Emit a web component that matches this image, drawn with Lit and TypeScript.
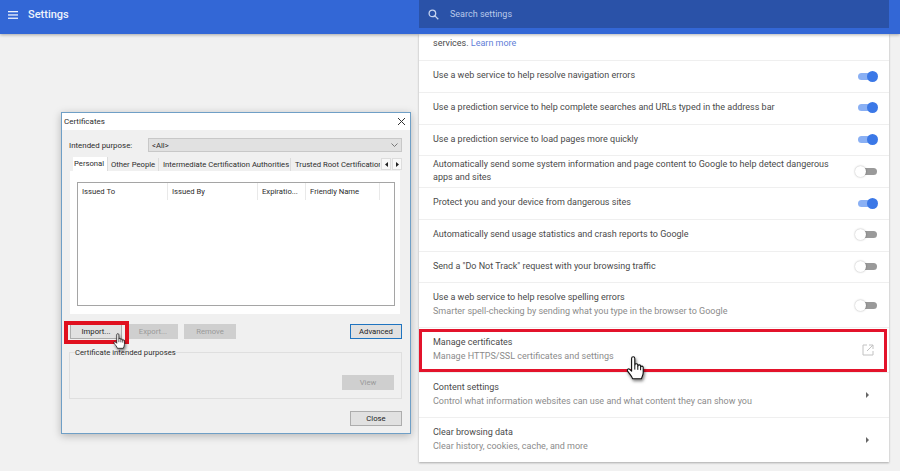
import { LitElement, html, css, svg } from "lit";
import { customElement } from "lit/decorators.js";

type Row = { title?: string; sub?: string; tall?: boolean; on?: boolean; off?: boolean; arrow?: boolean; ext?: boolean; mark?: boolean };

const rows: Row[] = [
  { title: "Use a web service to help resolve navigation errors", on: true },
  { title: "Use a prediction service to help complete searches and URLs typed in the address bar", on: true },
  { title: "Use a prediction service to load pages more quickly", on: true },
  { title: "Automatically send some system information and page content to Google to help detect dangerous apps and sites", off: true },
  { title: "Protect you and your device from dangerous sites", on: true },
  { title: "Automatically send usage statistics and crash reports to Google", off: true },
  { title: 'Send a "Do Not Track" request with your browsing traffic', off: true },
  { title: "Use a web service to help resolve spelling errors", sub: "Smarter spell-checking by sending what you type in the browser to Google", tall: true, off: true },
  { title: "Manage certificates", sub: "Manage HTTPS/SSL certificates and settings", tall: true, ext: true, mark: true },
  { title: "Content settings", sub: "Control what information websites can use and what content they can show you", tall: true, arrow: true },
  { title: "Clear browsing data", sub: "Clear history, cookies, cache, and more", tall: true, arrow: true },
];

const hand = svg`
  <path d="M5.6 2.4a1.6 1.6 0 0 1 3.2 0v6.8a1.5 1.5 0 0 1 3 .2v.8a1.4 1.4 0 0 1 2.8.2v.9a1.3 1.3 0 0 1 2.6.2v5.2c0 2.6-1.2 3.6-1.7 6H6.6c-.8-2.8-2.8-4.4-5-7.6-.9-1.5.8-3 2.1-1.8l1.9 1.9z" fill="#fff" stroke="#111" stroke-width="1.1" stroke-linejoin="round"/>
  <path d="M8.8 9.4v4.2M11.8 10.2v3.6M14.6 11.2v3" fill="none" stroke="#111" stroke-width="1"/>`;

@customElement("app-root")
export class AppRoot extends LitElement {
  static styles = css`
    :host { display: block; width: 900px; height: 471px; overflow: hidden; background: #f1f1f1; font-family: Roboto, "Liberation Sans", sans-serif; }
    .header { position: relative; z-index: 2; display: flex; height: 34px; background: #3367d6; box-shadow: 0 1px 3px rgba(0,0,0,.3); }
    .brand { width: 419px; flex: none; display: flex; align-items: center; padding: 0 0 0 8px; gap: 10px; box-sizing: border-box; color: #eef3fc; font-size: 11px; font-weight: 500; height: 29px; }
    .search { width: 470px; height: 28px; background: #2a52a8; display: flex; align-items: center; padding-left: 9px; gap: 11px; box-sizing: border-box; color: #b9c9ea; font-size: 9px; }
    .main { display: flex; align-items: flex-start; }
    .left { width: 419px; flex: none; padding: 78px 0 0 61px; box-sizing: border-box; }

    .dialog { width: 350px; box-sizing: border-box; border: 1px solid #6f9fc6; background: #f0f0f0; box-shadow: 0 2px 8px rgba(0,0,0,.25); font-family: Roboto, "Noto Sans", sans-serif; font-size: 7.7px; color: #2c2c2c; padding-bottom: 7px; }
    .title { height: 17px; background: #fff; display: flex; align-items: center; justify-content: space-between; padding: 0 4px 0 2px; font-size: 8px; }
    .purpose { display: flex; align-items: center; height: 14px; margin: 8px 8px 0 7px; }
    .purpose span { width: 79px; flex: none; font-size: 7.9px; }
    .select { flex: 1; height: 14px; background: #e1e1e1; border: 1px solid #c8c8c8; box-sizing: border-box; display: flex; align-items: center; justify-content: space-between; padding: 0 3px; }
    .tabs { display: flex; height: 14px; margin: 5px 8px 0 11px; align-items: flex-end; }
    .tab { height: 13px; display: flex; align-items: center; box-sizing: border-box; padding: 0 4px; background: #f0f0f0; border-right: 1px solid #dcdcdc; white-space: nowrap; overflow: hidden; flex: none; }
    .tab.active { height: 14px; background: #fff; width: 35px; padding: 0 1px 2px; }
    .tab.wide1 { width: 51px; padding-left: 3px; }
    .tab.wide2 { width: 132px; }
    .tab.clip { width: 89px; border: 0; }
    .scroll { width: 10px; height: 12px; margin: 0 0 1px 1px; background: #f8f8f8; border: 1px solid #ddd; box-sizing: border-box; display: flex; align-items: center; justify-content: center; flex: none; }
    .panel { height: 143px; margin: 0 10px 0 8px; background: #fff; padding: 11px 5px 0 7px; box-sizing: border-box; }
    .list { height: 124px; border: 1px solid #a5a5a5; box-sizing: border-box; }
    .cols { display: flex; height: 17px; }
    .col { box-sizing: border-box; height: 17px; border-right: 1px solid #e9e9e9; display: flex; align-items: center; padding-left: 4px; flex: none; }
    .c90 { width: 90px; }
    .c48 { width: 48px; }
    .c74 { width: 74px; }
    .buttons { display: flex; margin: 10px 8px 0 8px; gap: 6px; }
    .btn { height: 15px; box-sizing: border-box; border: 1px solid #adadad; background: #e1e1e1; display: flex; align-items: center; justify-content: center; flex: none; color: #222; }
    .btn.dim { background: #cfcfcf; border-color: #cfcfcf; color: #9a9a9a; }
    .btn.blue { border: 1px solid #1f74c0; background: #e1e1e1; }
    .push { margin-left: auto; }
    .w52 { width: 52px; }
    .w50 { width: 50px; }
    .import { position: relative; }
    .import::after { content: ""; position: absolute; left: -7px; top: -4px; width: 65px; height: 23px; box-sizing: border-box; border: 4px solid #e0101f; }
    .group { position: relative; margin: 13px 8px 0 7px; height: 47px; box-sizing: border-box; border: 1px solid #dfdfdf; display: flex; justify-content: flex-end; padding: 22px 7px 0 0; }
    .group > span { position: absolute; left: 5px; top: -5px; background: #f0f0f0; }
    .closeRow { display: flex; justify-content: flex-end; margin: 12px 8px 0 0; }
    .pointer { position: absolute; z-index: 1; filter: drop-shadow(1px 2px 1.5px rgba(0,0,0,.5)); }
    .pointer.small { left: 42px; top: 8px; }
    .pointer.big { left: 207px; top: 28px; }

    .card { width: 470px; height: 428px; background: #fff; overflow: hidden; box-shadow: 0 1px 2px rgba(0,0,0,.3); font-size: 9px; line-height: 13.7px; color: #4a4a4a; }
    .intro { height: 26px; box-sizing: border-box; padding: 3px 14px 0; }
    .intro a { color: #5f80d8; text-decoration: none; }
    .row { position: relative; height: 31.75px; box-sizing: border-box; border-top: 1px solid #efefef; display: flex; align-items: center; padding: 0 10px 0.5px 14px; }
    .row.tall { height: 45px; }
    .text { flex: 1; min-width: 0; padding-right: 20px; }
    .sub { color: #8b8b8b; }
    .toggle { position: relative; width: 21px; height: 11px; flex: none; }
    .toggle i { position: absolute; top: 2px; left: 0; width: 19px; height: 7px; border-radius: 3.5px; background: #9a9a9a; }
    .toggle b { position: absolute; top: 0; left: -3px; width: 11px; height: 11px; border-radius: 50%; background: #fff; box-shadow: 0 0 2px rgba(0,0,0,.35); }
    .toggle.on i { background: #8ab0f4; }
    .toggle.on b { left: 9px; background: #3b78e7; box-shadow: none; }
    .mark { position: absolute; left: 0; top: 1px; right: 2px; height: 43px; box-sizing: border-box; border: 3px solid #e3132b; }
    .arrow { width: 0; height: 0; border-left: 3px solid #666; border-top: 3px solid transparent; border-bottom: 3px solid transparent; margin-right: 10px; flex: none; }
    .ext { flex: none; margin-right: 5px; }
  `;

  private row(r: Row) {
    return html`<div class="row ${r.tall ? "tall" : ""}">
      <div class="text">${r.title}${r.sub ? html`<div class="sub">${r.sub}</div>` : ""}</div>
      ${r.on ? html`<div class="toggle on"><i></i><b></b></div>` : ""}
      ${r.off ? html`<div class="toggle"><i></i><b></b></div>` : ""}
      ${r.arrow ? html`<div class="arrow"></div>` : ""}
      ${r.ext ? html`<svg class="ext" width="12" height="12" viewBox="0 0 12 12" fill="none" stroke="#c2c2c2" stroke-width="1"><path d="M5 1H1v10h10V7M7 1h4v4M11 1L5 7"/></svg>` : ""}
      ${r.mark ? html`<div class="mark"></div>
        <svg class="pointer big" width="18" height="25" viewBox="0 0 18 25">${hand}</svg>` : ""}
    </div>`;
  }

  render() {
    return html`
      <div class="header">
        <div class="brand">
          <svg width="10" height="8" viewBox="0 0 10 8" fill="#eef3fc"><rect width="10" height="1.3"/><rect y="3.3" width="10" height="1.3"/><rect y="6.6" width="10" height="1.3"/></svg>
          Settings
        </div>
        <div class="search">
          <svg width="11" height="11" viewBox="0 0 11 11" fill="none" stroke="#c6d4f0" stroke-width="1.3"><circle cx="4.4" cy="4.4" r="3.3"/><path d="M6.9 6.9L10.3 10.3"/></svg>
          Search settings
        </div>
      </div>
      <div class="main">
        <div class="left">
          <div class="dialog">
            <div class="title">Certificates
              <svg width="9" height="9" viewBox="0 0 9 9" stroke="#333" stroke-width="1"><path d="M1 1l7 7M8 1L1 8"/></svg>
            </div>
            <div class="purpose"><span>Intended purpose:</span>
              <div class="select">&lt;All&gt;
                <svg width="7" height="4" viewBox="0 0 7 4" fill="none" stroke="#777"><path d="M.5.5l3 3 3-3"/></svg>
              </div>
            </div>
            <div class="tabs">
              <div class="tab active">Personal</div>
              <div class="tab wide1">Other People</div>
              <div class="tab wide2">Intermediate Certification Authorities</div>
              <div class="tab clip">Trusted Root Certification Authorities</div>
              <div class="scroll"><svg width="3" height="5" viewBox="0 0 3 5" fill="#222"><path d="M3 0v5L0 2.5z"/></svg></div>
              <div class="scroll"><svg width="3" height="5" viewBox="0 0 3 5" fill="#222"><path d="M0 0v5l3-2.5z"/></svg></div>
            </div>
            <div class="panel">
              <div class="list">
                <div class="cols">
                  <div class="col c90">Issued To</div>
                  <div class="col c90">Issued By</div>
                  <div class="col c48">Expiratio...</div>
                  <div class="col c74">Friendly Name</div>
                </div>
              </div>
            </div>
            <div class="buttons">
              <div class="btn w52 import">Import...
                <svg class="pointer small" width="12" height="17" viewBox="0 0 18 25">${hand}</svg>
              </div>
              <div class="btn w50 dim">Export...</div>
              <div class="btn w52 dim">Remove</div>
              <div class="btn w52 blue push">Advanced</div>
            </div>
            <div class="group"><span>Certificate intended purposes</span>
              <div class="btn w52 dim">View</div>
            </div>
            <div class="closeRow"><div class="btn w52">Close</div></div>
          </div>
        </div>
        <div class="card">
          <div class="intro">services. <a>Learn more</a></div>
          ${rows.map((r) => this.row(r))}
        </div>
      </div>
    `;
  }
}
